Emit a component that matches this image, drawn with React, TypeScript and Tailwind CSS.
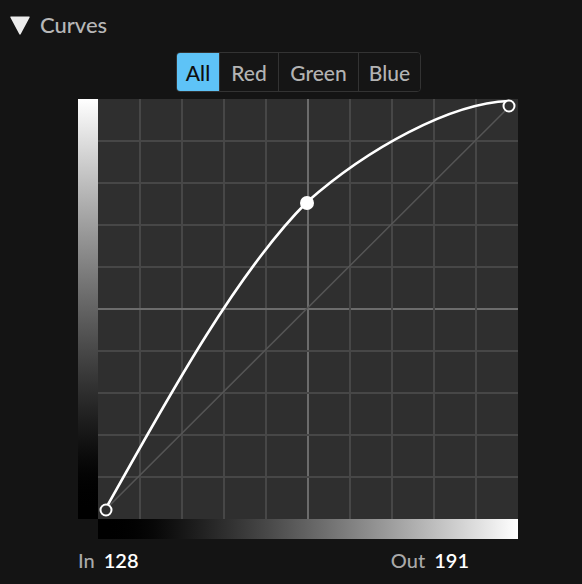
import React from 'react';

const GRID = 420;
const STEP = 42;

const channels = [
  { label: 'All', w: 'w-[42px]' },
  { label: 'Red', w: 'w-[59px]' },
  { label: 'Green', w: 'w-[80px]' },
  { label: 'Blue', w: 'w-[62px]' },
];

// curve points in graph-local coordinates (graph origin at page 98,100)
const ox = 98;
const oy = 100;
const p = (x: number, y: number) => `${x - ox},${y - oy}`;

const curvePath =
  `M${p(105, 511)} C${p(167, 400)} ${p(237, 273)} ${p(307, 203)} ` +
  `C${p(367, 150)} ${p(450, 104)} ${p(509, 102)}`;

const CurveGraph: React.FC = () => {
  const lines = Array.from({ length: 9 }, (_, i) => (i + 1) * STEP);
  return (
    <svg width={GRID} height={GRID} viewBox={`0 0 ${GRID} ${GRID}`} className="block overflow-visible">
      <rect x={0} y={0} width={GRID} height={GRID} fill="#2f2f2f" />
      {lines.map((v, i) => (
        <g key={v}>
          <rect x={v - 1} y={0} width={2} height={GRID} fill={i === 4 ? '#6c6c6c' : '#474747'} />
          <rect x={0} y={v - 1} width={GRID} height={2} fill={i === 4 ? '#6c6c6c' : '#474747'} />
        </g>
      ))}
      <line x1={105 - ox} y1={511 - oy} x2={509 - ox} y2={108 - oy} stroke="#555" strokeWidth={1.5} />
      <path d={curvePath} fill="none" stroke="#fff" strokeWidth={2.6} />
      <circle cx={106 - ox} cy={511 - oy} r={5.5} fill="#2f2f2f" stroke="#fff" strokeWidth={2} />
      <circle cx={509 - ox} cy={107 - oy} r={5.5} fill="#2f2f2f" stroke="#fff" strokeWidth={2} />
      <circle cx={307 - ox} cy={204 - oy} r={7} fill="#fff" />
    </svg>
  );
};

export default function App() {
  const [active, setActive] = React.useState(0);

  return (
    <div className="w-[582px] h-[584px] bg-[#141414] font-['Lato','Open_Sans',sans-serif] select-none">
      <div className="flex items-center h-[52px] pl-[9px] pb-[2px]">
        <svg width="22" height="22" viewBox="0 0 22 22" className="block">
          <path d="M2 2.5 L20 2.5 Q21.2 2.5 20.6 3.6 L11.8 20 Q11 21.3 10.2 20 L1.4 3.6 Q0.8 2.5 2 2.5 Z" fill="#ececec" />
        </svg>
        <span className="ml-[9px] text-[22px] leading-none font-medium text-[#b7b7b7]">Curves</span>
      </div>

      <div className="flex justify-start pl-[176px]">
        <div className="flex h-[40px] rounded-[4px] border border-[#333] overflow-hidden">
          {channels.map((c, i) => (
            <button
              key={c.label}
              onClick={() => setActive(i)}
              className={`${c.w} h-full flex items-center justify-center text-[21px] leading-none font-medium
                ${i > 0 ? 'border-l border-[#333]' : ''}
                ${active === i ? 'bg-[#5ec3f7] text-[#0e0e0e]' : 'bg-[#151515] text-[#b3b3b3]'}`}
            >
              {c.label}
            </button>
          ))}
        </div>
      </div>

      <div className="mt-[7px] pl-[78px]">
        <div className="flex">
          <div className="w-[20px] h-[420px] bg-gradient-to-b from-white to-black" />
          <CurveGraph />
        </div>
        <div className="flex">
          <div className="w-[20px] h-[20px]" />
          <div className="w-[420px] h-[20px] bg-gradient-to-r from-black to-white" />
        </div>
        <div className="flex items-center w-[391px] mt-[11px] text-[20px] leading-none font-medium">
          <span className="text-[#a9a9a9]">In</span>
          <span className="ml-[9px] text-white font-semibold">128</span>
          <span className="ml-auto text-[#a9a9a9]">Out</span>
          <span className="ml-[9px] text-white font-semibold">191</span>
        </div>
      </div>
    </div>
  );
}
